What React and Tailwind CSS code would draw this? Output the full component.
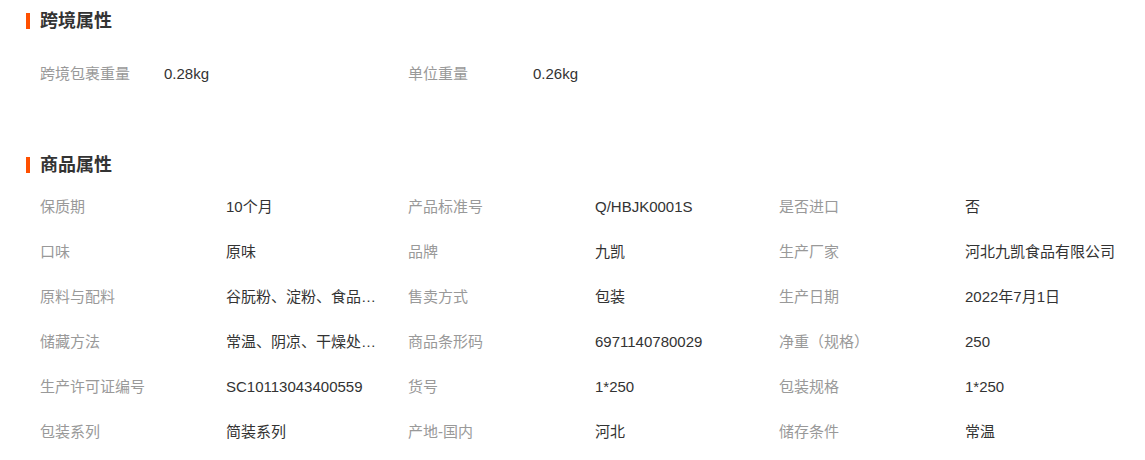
import React from "react";

const font = { fontFamily: '"Liberation Sans", "Noto Sans CJK SC", sans-serif' };

function Title({ children }) {
  return (
    <div className="flex h-10 items-center">
      <div className="ml-[26px] h-4 w-1 bg-[#ff5000]" />
      <div className="ml-[10px] text-[18px] font-bold text-[#333]">{children}</div>
    </div>
  );
}

const rows = [
  ["保质期", "10个月", "产品标准号", "Q/HBJK0001S", "是否进口", "否"],
  ["口味", "原味", "品牌", "九凯", "生产厂家", "河北九凯食品有限公司"],
  ["原料与配料", "谷朊粉、淀粉、食品添加剂", "售卖方式", "包装", "生产日期", "2022年7月1日"],
  ["储藏方法", "常温、阴凉、干燥处保存", "商品条形码", "6971140780029", "净重（规格）", "250"],
  ["生产许可证编号", "SC10113043400559", "货号", "1*250", "包装规格", "1*250"],
  ["包装系列", "简装系列", "产地-国内", "河北", "储存条件", "常温"],
];

export default function App() {
  return (
    <div className="h-[460px] w-[1145px] bg-white pt-px text-[15px]" style={font}>
      <Title>跨境属性</Title>
      <div className="mt-[11px] flex h-[45px] items-center pl-10">
        <div className="w-[124px] text-[#999]">跨境包裹重量</div>
        <div className="w-[244px] text-[#333]">0.28kg</div>
        <div className="w-[125px] text-[#999]">单位重量</div>
        <div className="text-[#333]">0.26kg</div>
      </div>
      <div className="mt-[48px]">
        <Title>商品属性</Title>
      </div>
      <div className="pl-10">
        {rows.map((r, i) => (
          <div key={i} className="grid h-[45px] grid-cols-[186px_182px_187px_184px_186px_1fr] items-center">
            <div className="text-[#999]">{r[0]}</div>
            <div className="w-[152px] truncate text-[#333]">{r[1]}</div>
            <div className="text-[#999]">{r[2]}</div>
            <div className="w-[152px] truncate text-[#333]">{r[3]}</div>
            <div className="text-[#999]">{r[4]}</div>
            <div className="truncate text-[#333]">{r[5]}</div>
          </div>
        ))}
      </div>
    </div>
  );
}
